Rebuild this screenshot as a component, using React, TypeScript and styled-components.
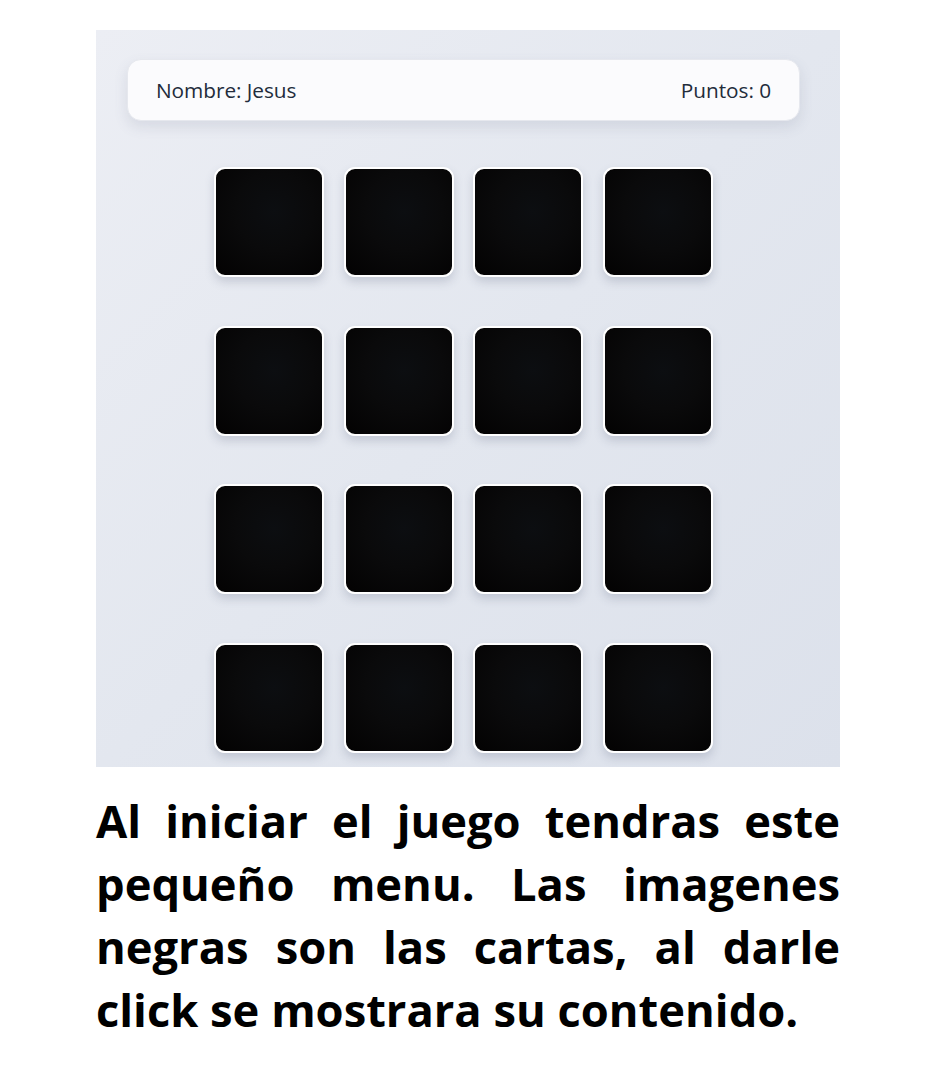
import React from "react";
import styled, { createGlobalStyle } from "styled-components";

const Global = createGlobalStyle`
  html, body { margin: 0; padding: 0; background: #ffffff; }
  body { font-family: "Open Sans", "Liberation Sans", sans-serif; }
`;

const Page = styled.div`
  width: 947px;
  padding-top: 30px;
  display: flex;
  flex-direction: column;
  align-items: flex-start;
`;

const Shot = styled.div`
  margin-left: 96px;
  width: 744px;
  height: 737px;
  box-sizing: border-box;
  padding: 29px 40px 0 31px;
  background: linear-gradient(135deg, #eceef4 0%, #e3e7ef 50%, #dce1eb 100%);
  display: flex;
  flex-direction: column;
  align-items: stretch;
`;

const Header = styled.div`
  height: 62px;
  box-sizing: border-box;
  background: #fbfbfd;
  border: 1px solid #e6e8ee;
  border-radius: 14px;
  box-shadow: 0 6px 14px rgba(90, 100, 130, 0.14);
  display: flex;
  align-items: center;
  justify-content: space-between;
  padding: 0 28px 0 28px;
`;

const Label = styled.span`
  font-family: "Open Sans", "Liberation Sans", sans-serif;
  font-size: 20.8px;
  font-weight: 500;
  color: #222c3b;
  letter-spacing: -0.05px;
`;

const Grid = styled.div`
  margin-top: 46px;
  align-self: center;
  display: grid;
  grid-template-columns: repeat(4, 110px);
  column-gap: 19.5px;
  row-gap: 48.5px;
`;

const Card = styled.div`
  width: 110px;
  height: 110px;
  box-sizing: border-box;
  border: 2px solid #ffffff;
  border-radius: 11px;
  background: radial-gradient(circle at 55% 40%, #0c0e11 0%, #0a0a0b 45%, #030202 100%);
  box-shadow: 0 5px 10px rgba(80, 90, 120, 0.22);
`;

const Caption = styled.p`
  margin: 22px 0 0 96px;
  width: 744px;
  font-family: "Open Sans", "Liberation Sans", sans-serif;
  font-weight: 700;
  font-size: 45.3px;
  line-height: 63px;
  color: #000000;
  text-align: justify;
`;

export default function App() {
  const cards = Array.from({ length: 16 }, (_, i) => i);
  return (
    <>
      <Global />
      <Page>
        <Shot>
          <Header>
            <Label>Nombre: Jesus</Label>
            <Label>Puntos: 0</Label>
          </Header>
          <Grid>
            {cards.map((i) => (
              <Card key={i} />
            ))}
          </Grid>
        </Shot>
        <Caption>
          Al iniciar el juego tendras este pequeño menu. Las imagenes negras son las cartas, al darle click se mostrara su contenido.
        </Caption>
      </Page>
    </>
  );
}
